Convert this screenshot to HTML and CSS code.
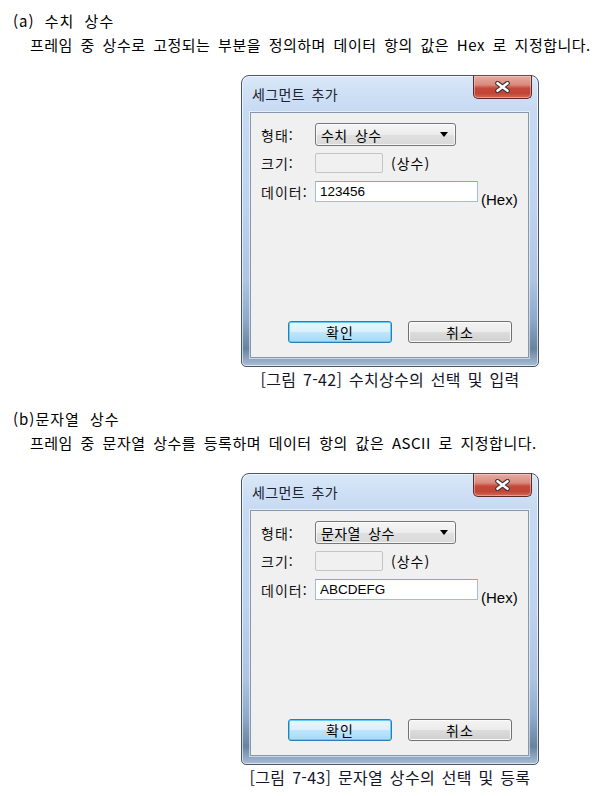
FILE: index.html
```html
<!DOCTYPE html>
<html lang="ko">
<head>
<meta charset="utf-8">
<title>세그먼트 추가</title>
<link rel="stylesheet" href="styles.css">
</head>
<body>
<section class="sec sec-a">
  <p class="head">(a) 수치 상수</p>
  <p class="desc">프레임 중 상수로 고정되는 부분을 정의하며 데이터 항의 값은 Hex 로 지정합니다.</p>
  <figure class="fig">
    <div class="dlg">
      <div class="titlebar"><span class="title">세그먼트 추가</span></div>
      <span class="close"><svg width="17" height="12" viewBox="0 0 17 12"><path d="M3.5 2.2 L13.5 9.8 M13.5 2.2 L3.5 9.8" stroke="#3b3030" stroke-width="4.6" stroke-linecap="round" fill="none"/><path d="M3.5 2.2 L13.5 9.8 M13.5 2.2 L3.5 9.8" stroke="#ffffff" stroke-width="2.6" stroke-linecap="round" fill="none"/></svg></span>
      <div class="client">
        <div class="row r1"><span class="lbl">형태:</span><div class="combo"><span>수치 상수</span><i class="arrow"></i></div></div>
        <div class="row r2"><span class="lbl">크기:</span><div class="sizebox"></div><span class="unit">(상수)</span></div>
        <div class="row r3"><span class="lbl">데이터:</span><div class="input">123456</div><span class="hex">(Hex)</span></div>
        <div class="btns"><span class="btn def">확인</span><span class="btn">취소</span></div>
      </div>
    </div>
    <figcaption>[그림 7-42] 수치상수의 선택 및 입력</figcaption>
  </figure>
</section>
<section class="sec sec-b">
  <p class="head">(b)문자열 상수</p>
  <p class="desc">프레임 중 문자열 상수를 등록하며 데이터 항의 값은 ASCII 로 지정합니다.</p>
  <figure class="fig">
    <div class="dlg">
      <div class="titlebar"><span class="title">세그먼트 추가</span></div>
      <span class="close"><svg width="17" height="12" viewBox="0 0 17 12"><path d="M3.5 2.2 L13.5 9.8 M13.5 2.2 L3.5 9.8" stroke="#3b3030" stroke-width="4.6" stroke-linecap="round" fill="none"/><path d="M3.5 2.2 L13.5 9.8 M13.5 2.2 L3.5 9.8" stroke="#ffffff" stroke-width="2.6" stroke-linecap="round" fill="none"/></svg></span>
      <div class="client">
        <div class="row r1"><span class="lbl">형태:</span><div class="combo"><span>문자열 상수</span><i class="arrow"></i></div></div>
        <div class="row r2"><span class="lbl">크기:</span><div class="sizebox"></div><span class="unit">(상수)</span></div>
        <div class="row r3"><span class="lbl">데이터:</span><div class="input">ABCDEFG</div><span class="hex">(Hex)</span></div>
        <div class="btns"><span class="btn def">확인</span><span class="btn">취소</span></div>
      </div>
    </div>
    <figcaption>[그림 7-43] 문자열 상수의 선택 및 등록</figcaption>
  </figure>
</section>
</body>
</html>
```
FILE: styles.css
```css
html, body {
  margin: 0;
  padding: 0;
  background: #ffffff;
}
body {
  width: 610px;
  font-family: "Noto Sans CJK KR", "Liberation Sans", sans-serif;
  color: #000;
}
.sec {
  display: flex;
  flex-direction: column;
}
.sec-a {
  padding-top: 11px;
}
.sec-b {
  margin-top: 20px;
}
.head {
  margin: 0;
  padding-left: 13px;
  font-size: 15px;
  line-height: 20px;
  height: 20px;
  letter-spacing: 1px;
  word-spacing: 5px;
}
.desc {
  margin: 4px 0 0 0;
  padding-left: 30px;
  font-size: 15px;
  line-height: 20px;
  height: 20px;
  letter-spacing: 0.5px;
  word-spacing: 3px;
  white-space: nowrap;
}
.fig {
  margin: 20px 0 0 241px;
  width: 298px;
  display: flex;
  flex-direction: column;
  align-items: center;
}
.dlg {
  position: relative;
  box-sizing: border-box;
  width: 298px;
  height: 292px;
  border: 1px solid #4b5667;
  border-radius: 8px 8px 5px 5px;
  padding: 0 9px 8px 8px;
  display: flex;
  flex-direction: column;
  background: linear-gradient(180deg, #d9e7f8 0%, #c6daf2 12%, #bed3ee 45%, #aec5e3 70%, #8ea9ca 84%, #66839f 94%, #a9bdd6 100%);
  box-shadow: inset 0 0 0 1px rgba(255,255,255,0.6);
}
.titlebar {
  height: 36px;
  display: flex;
  align-items: center;
  flex: none;
}
.title {
  padding-left: 2px;
  font-size: 14px;
  color: #1c2232;
  letter-spacing: 0.4px;
  word-spacing: 2px;
}
.close {
  position: absolute;
  top: -1px;
  right: 6px;
  width: 59px;
  height: 24px;
  box-sizing: border-box;
  border: 1px solid #5a2b27;
  border-top-color: #6b4a48;
  border-radius: 0 0 5px 5px;
  background: linear-gradient(180deg, #e6aca2 0%, #d98a7d 40%, #c5493b 55%, #c24638 80%, #d46a55 100%);
  box-shadow: inset 0 0 0 1px rgba(255,220,210,0.45);
  display: flex;
  align-items: center;
  justify-content: center;
}
.close svg {
  display: block;
}
.client {
  flex: 1;
  box-sizing: border-box;
  border: 1px solid #8797ab;
  background: #f0f0f0;
  box-shadow: 0 0 0 1px rgba(255,255,255,0.55);
  padding: 10px 0 14px 10px;
  display: flex;
  flex-direction: column;
  font-size: 14px;
}
.row {
  display: flex;
  align-items: center;
}
.lbl {
  width: 54px;
  flex: none;
  color: #111;
  letter-spacing: 1px;
}
.r1 { height: 23px; }
.r2 { height: 20px; margin-top: 7px; }
.r3 { height: 21px; margin-top: 8px; }
.combo {
  box-sizing: border-box;
  width: 141px;
  height: 23px;
  border: 1px solid #777;
  border-radius: 3px;
  background: linear-gradient(180deg, #f6f6f6 0%, #ececec 50%, #e0e0e0 51%, #d9d9d9 100%);
  box-shadow: inset 0 0 0 1px rgba(255,255,255,0.7);
  display: flex;
  align-items: center;
  justify-content: space-between;
  padding: 0 7px 0 5px;
  letter-spacing: 0.4px;
  word-spacing: 3px;
}
.arrow {
  width: 0;
  height: 0;
  border-left: 4px solid transparent;
  border-right: 4px solid transparent;
  border-top: 5px solid #000;
}
.sizebox {
  box-sizing: border-box;
  width: 68px;
  height: 20px;
  border: 1px solid #c4c4c4;
  border-radius: 2px;
  background: #f0f0f0;
}
.unit {
  margin-left: 8px;
  letter-spacing: 1px;
}
.input {
  box-sizing: border-box;
  width: 163px;
  height: 21px;
  border: 1px solid #a3bcd8;
  border-top-color: #8aa6c6;
  background: #fff;
  padding-left: 4px;
  line-height: 19px;
  font-family: "Liberation Sans", "Noto Sans CJK KR", sans-serif;
  font-size: 13.5px;
}
.hex {
  margin-left: 3px;
  align-self: flex-end;
  margin-bottom: -6px;
  font-family: "Liberation Sans", "Noto Sans CJK KR", sans-serif;
  font-size: 15px;
}
.btns {
  margin-top: auto;
  display: flex;
  gap: 16px;
  padding-left: 27px;
}
.btn {
  box-sizing: border-box;
  width: 104px;
  height: 22px;
  border-radius: 3px;
  display: flex;
  align-items: center;
  justify-content: center;
  font-size: 14px;
  letter-spacing: 1px;
  border: 1px solid #707070;
  background: linear-gradient(180deg, #f3f3f3 0%, #ebebeb 50%, #dddddd 51%, #cfcfcf 100%);
  box-shadow: inset 0 0 0 1px #fbfbfb;
}
.btn.def {
  border-color: #2f7bb5;
  background: linear-gradient(180deg, #eaf6fd 0%, #d9f0fc 50%, #bee6fd 51%, #a7d9f5 100%);
  box-shadow: inset 0 0 0 1px #63cdf8;
}
figcaption {
  margin-top: 2px;
  font-size: 16px;
  line-height: 20px;
  white-space: nowrap;
  color: #15152a;
  letter-spacing: 0.3px;
  word-spacing: 2px;
}
```
